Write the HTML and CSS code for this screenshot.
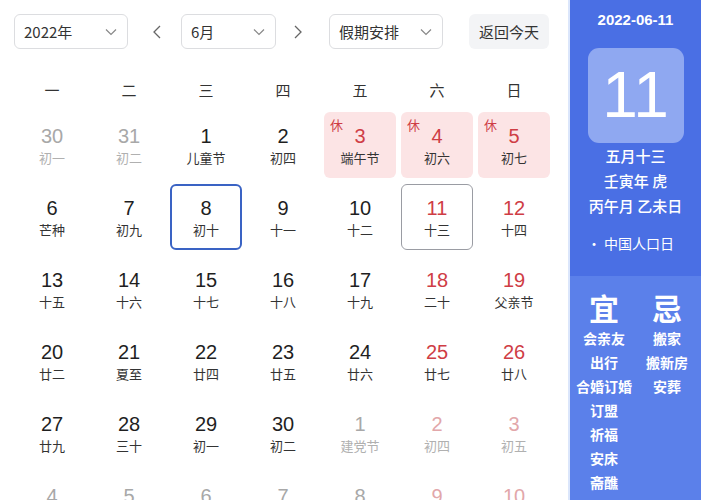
FILE: index.html
```html
<!DOCTYPE html>
<html lang="zh">
<head>
<meta charset="utf-8">
<link rel="stylesheet" href="styles.css">
</head>
<body>
<div class="app">
  <div class="main">
    <div class="toolbar">
      <div class="select sel-year"><span>2022年</span><svg class="chev" viewBox="0 0 12 8"><path d="M1 1.5 6 6.5 11 1.5"/></svg></div>
      <svg class="arrow prev" viewBox="0 0 8 14"><path d="M7 1 1 7 7 13"/></svg>
      <div class="select sel-month"><span>6月</span><svg class="chev" viewBox="0 0 12 8"><path d="M1 1.5 6 6.5 11 1.5"/></svg></div>
      <svg class="arrow next" viewBox="0 0 8 14"><path d="M1 1 7 7 1 13"/></svg>
      <div class="select sel-hol"><span>假期安排</span><svg class="chev" viewBox="0 0 12 8"><path d="M1 1.5 6 6.5 11 1.5"/></svg></div>
      <div class="today-btn">返回今天</div>
    </div>
    <div class="weekdays">
      <span>一</span><span>二</span><span>三</span><span>四</span><span>五</span><span>六</span><span>日</span>
    </div>
    <div class="grid">
      <div class="cell other"><b>30</b><i>初一</i></div>
      <div class="cell other"><b>31</b><i>初二</i></div>
      <div class="cell"><b>1</b><i>儿童节</i></div>
      <div class="cell"><b>2</b><i>初四</i></div>
      <div class="cell hol"><em>休</em><b>3</b><i>端午节</i></div>
      <div class="cell hol"><em>休</em><b>4</b><i>初六</i></div>
      <div class="cell hol"><em>休</em><b>5</b><i>初七</i></div>

      <div class="cell"><b>6</b><i>芒种</i></div>
      <div class="cell"><b>7</b><i>初九</i></div>
      <div class="cell sel"><b>8</b><i>初十</i></div>
      <div class="cell"><b>9</b><i>十一</i></div>
      <div class="cell"><b>10</b><i>十二</i></div>
      <div class="cell wk today"><b>11</b><i>十三</i></div>
      <div class="cell wk"><b>12</b><i>十四</i></div>

      <div class="cell"><b>13</b><i>十五</i></div>
      <div class="cell"><b>14</b><i>十六</i></div>
      <div class="cell"><b>15</b><i>十七</i></div>
      <div class="cell"><b>16</b><i>十八</i></div>
      <div class="cell"><b>17</b><i>十九</i></div>
      <div class="cell wk"><b>18</b><i>二十</i></div>
      <div class="cell wk"><b>19</b><i>父亲节</i></div>

      <div class="cell"><b>20</b><i>廿二</i></div>
      <div class="cell"><b>21</b><i>夏至</i></div>
      <div class="cell"><b>22</b><i>廿四</i></div>
      <div class="cell"><b>23</b><i>廿五</i></div>
      <div class="cell"><b>24</b><i>廿六</i></div>
      <div class="cell wk"><b>25</b><i>廿七</i></div>
      <div class="cell wk"><b>26</b><i>廿八</i></div>

      <div class="cell"><b>27</b><i>廿九</i></div>
      <div class="cell"><b>28</b><i>三十</i></div>
      <div class="cell"><b>29</b><i>初一</i></div>
      <div class="cell"><b>30</b><i>初二</i></div>
      <div class="cell other"><b>1</b><i>建党节</i></div>
      <div class="cell other wk"><b>2</b><i>初四</i></div>
      <div class="cell other wk"><b>3</b><i>初五</i></div>

      <div class="cell other"><b>4</b><i>初六</i></div>
      <div class="cell other"><b>5</b><i>初七</i></div>
      <div class="cell other"><b>6</b><i>初八</i></div>
      <div class="cell other"><b>7</b><i>小暑</i></div>
      <div class="cell other"><b>8</b><i>初十</i></div>
      <div class="cell other wk"><b>9</b><i>十一</i></div>
      <div class="cell other wk"><b>10</b><i>十二</i></div>
    </div>
  </div>
  <div class="panel">
    <div class="panel-top">
      <div class="pdate">2022-06-11</div>
      <div class="bigday">11</div>
      <div class="lunar">五月十三</div>
      <div class="lunar">壬寅年 虎</div>
      <div class="lunar">丙午月 乙未日</div>
      <div class="fest"><span class="dot">•</span>中国人口日</div>
    </div>
    <div class="panel-bot">
      <div class="col">
        <div class="head">宜</div>
        <div>会亲友</div><div>出行</div><div>合婚订婚</div><div>订盟</div><div>祈福</div><div>安床</div><div>斋醮</div>
      </div>
      <div class="col">
        <div class="head">忌</div>
        <div>搬家</div><div>搬新房</div><div>安葬</div>
      </div>
    </div>
  </div>
</div>
</body>
</html>
```

FILE: styles.css
```css
* { box-sizing: border-box; }
html, body { margin: 0; padding: 0; }
body {
  width: 701px;
  height: 500px;
  overflow: hidden;
  background: #fff;
  font-family: "Liberation Sans", "Noto Sans CJK SC", sans-serif;
  color: #222;
}
.app { display: flex; height: 500px; }
.main { width: 568px; padding: 14px 0 0 14px; }
.toolbar { display: flex; align-items: center; height: 35px; }
.select {
  height: 35px;
  border: 1px solid #dcdde0;
  border-radius: 6px;
  display: flex;
  align-items: center;
  justify-content: space-between;
  padding: 0 10px 0 9px;
  font-size: 15px;
  color: #333;
  font-family: "Noto Sans CJK SC", sans-serif;
}
.sel-year { width: 114px; }
.sel-month { width: 95px; }
.sel-hol { width: 114px; }
.chev { width: 12px; height: 8px; fill: none; stroke: #888; stroke-width: 1.2; }
.arrow { width: 8px; height: 14px; fill: none; stroke: #666; stroke-width: 1.3; }
.arrow.prev { margin: 0 20px 0 25px; }
.arrow.next { margin: 0 27px 0 18px; }
.today-btn {
  margin-left: 26px;
  width: 80px;
  height: 35px;
  background: #f3f4f6;
  border-radius: 6px;
  display: flex;
  align-items: center;
  justify-content: center;
  font-size: 15px;
  color: #333;
  font-family: "Noto Sans CJK SC", sans-serif;
}
.weekdays {
  display: grid;
  grid-template-columns: repeat(7, 72px);
  column-gap: 5px;
  margin: 29px 0 0 2px;
  height: 24px;
  line-height: 24px;
  font-size: 15px;
  color: #333;
  font-family: "Noto Sans CJK SC", sans-serif;
}
.weekdays span { text-align: center; }
.grid {
  display: grid;
  grid-template-columns: repeat(7, 72px);
  grid-auto-rows: 66px;
  column-gap: 5px;
  row-gap: 6px;
  margin: 10px 0 0 2px;
}
.cell {
  position: relative;
  border-radius: 6px;
  display: flex;
  flex-direction: column;
  align-items: center;
  padding-top: 13px;
}
.cell b {
  font-weight: normal;
  font-size: 20px;
  line-height: 22px;
  color: #1f1f1f;
}
.cell i {
  font-style: normal;
  font-size: 13px;
  line-height: 18px;
  margin-top: 2px;
  color: #333;
  font-family: "Noto Sans CJK SC", sans-serif;
}
.cell.wk b { color: #cf3d45; }
.cell.hol { background: #fce4e5; }
.cell.hol b { color: #cf3d45; }
.cell.hol em {
  position: absolute;
  left: 6px;
  top: 3px;
  font-style: normal;
  font-size: 13px;
  color: #cf3d45;
  font-family: "Noto Sans CJK SC", sans-serif;
}
.cell.sel { border: 2px solid #3a63c4; padding-top: 11px; }
.cell.today { border: 1.5px solid #9a9ca3; padding-top: 11.5px; }
.cell.other b { color: #a8a8a8; }
.cell.other i { color: #b0b0b0; }
.cell.other.wk b { color: #e2a7aa; }
.panel {
  width: 133px;
  border-left: 2px solid #dbe6fb;
  display: flex;
  flex-direction: column;
  color: #fff;
  font-family: "Noto Sans CJK SC", sans-serif;
}
.panel-top {
  background: #4a6fe4;
  height: 276px;
  display: flex;
  flex-direction: column;
  align-items: center;
  padding-top: 10px;
}
.pdate {
  font-family: "Liberation Sans", sans-serif;
  font-weight: bold;
  font-size: 15px;
  line-height: 20px;
}
.bigday {
  margin-top: 18px;
  width: 96px;
  height: 95px;
  border-radius: 11px;
  background: #8fa8f1;
  font-family: "Liberation Sans", sans-serif;
  font-size: 64px;
  line-height: 95px;
  text-align: center;
}
.lunar { font-size: 15px; line-height: 25px; font-weight: 500; }
.lunar:first-of-type { margin-top: 7px; }
.fest { margin-top: 14px; font-size: 14px; line-height: 22px; align-self: flex-start; padding-left: 17px; }
.dot { margin-right: 3px; }
.panel-bot {
  flex: 1;
  background: #5b80ea;
  display: flex;
  justify-content: space-between;
  padding: 12px 3px 0 3px;
}
.col {
  display: flex;
  flex-direction: column;
  align-items: center;
  font-size: 14px;
  font-weight: bold;
  line-height: 24px;
  width: 62px;
}
.head { font-size: 30px; line-height: 38px; }
```
